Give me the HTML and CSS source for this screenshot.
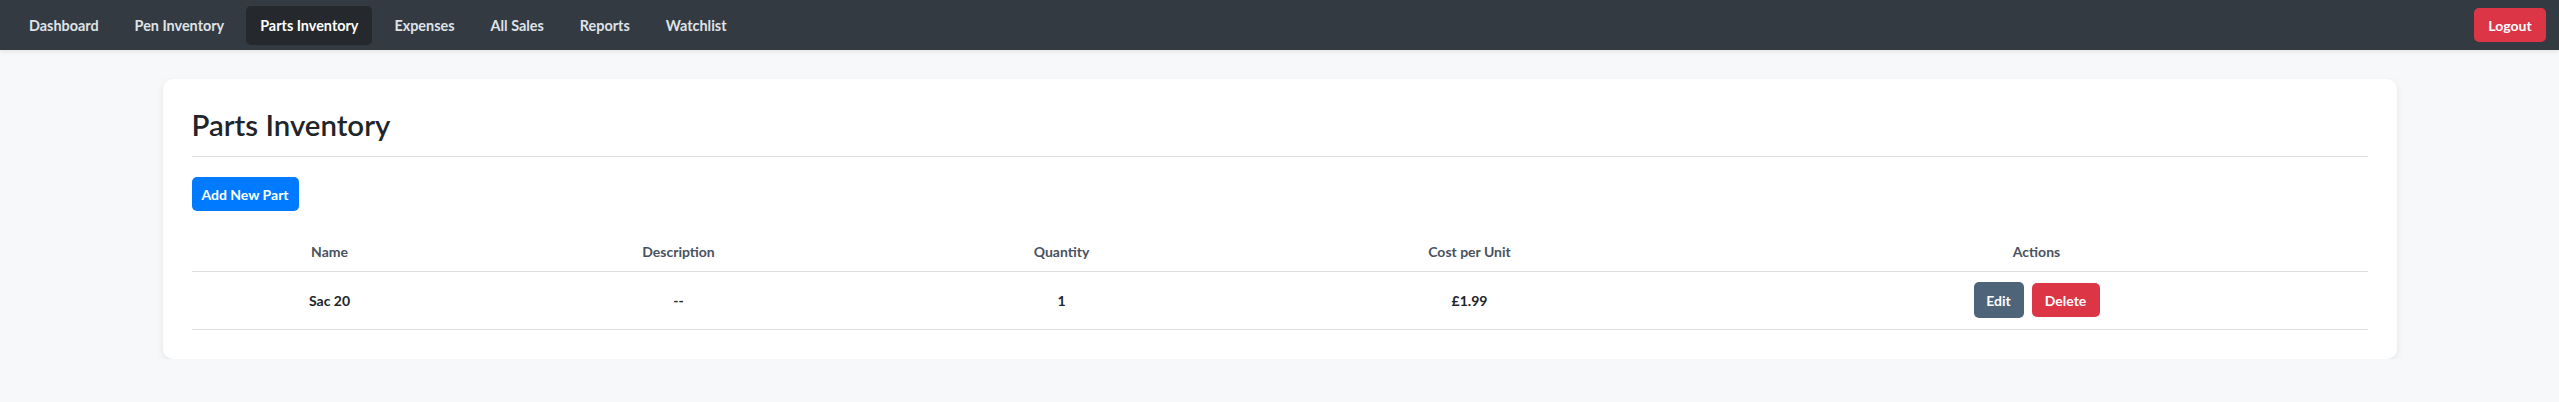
FILE: index.html
```html
<!DOCTYPE html>
<html lang="en">
<head>
<meta charset="utf-8">
<title>Parts Inventory</title>
<link rel="stylesheet" href="styles.css">
</head>
<body>
<nav class="navbar">
  <ul class="nav-links">
    <li><a class="nav-link" href="#">Dashboard</a></li>
    <li><a class="nav-link" href="#">Pen Inventory</a></li>
    <li><a class="nav-link active" href="#">Parts Inventory</a></li>
    <li><a class="nav-link" href="#">Expenses</a></li>
    <li><a class="nav-link" href="#">All Sales</a></li>
    <li><a class="nav-link" href="#">Reports</a></li>
    <li><a class="nav-link" href="#">Watchlist</a></li>
  </ul>
  <button class="btn btn-danger btn-logout">Logout</button>
</nav>
<main class="container">
  <section class="card">
    <h1 class="page-title">Parts Inventory</h1>
    <button class="btn btn-primary">Add New Part</button>
    <table class="parts-table">
      <colgroup>
        <col class="col-name">
        <col class="col-desc">
        <col class="col-qty">
        <col class="col-cost">
        <col class="col-actions">
      </colgroup>
      <thead>
        <tr>
          <th>Name</th>
          <th>Description</th>
          <th>Quantity</th>
          <th>Cost per Unit</th>
          <th>Actions</th>
        </tr>
      </thead>
      <tbody>
        <tr>
          <td>Sac 20</td>
          <td>--</td>
          <td>1</td>
          <td>£1.99</td>
          <td>
            <div class="actions">
              <button class="btn btn-edit">Edit</button>
              <button class="btn btn-danger btn-sm">Delete</button>
            </div>
          </td>
        </tr>
      </tbody>
    </table>
  </section>
</main>
</body>
</html>
```

FILE: styles.css
```css
* { box-sizing: border-box; }

html, body {
  margin: 0;
  padding: 0;
}

body {
  font-family: Lato, "Open Sans", "Liberation Sans", sans-serif;
  background: #f7f8fa;
  color: #212529;
  font-size: 14px;
}

.navbar {
  height: 50px;
  background: #343a41;
  display: flex;
  align-items: center;
  justify-content: space-between;
  padding: 0 13px 0 15px;
  box-shadow: 0 2px 4px rgba(0, 0, 0, 0.08);
}

.nav-links {
  list-style: none;
  margin: 0;
  padding: 0;
  display: flex;
  gap: 8px;
}

.nav-link {
  display: block;
  height: 39px;
  line-height: 39px;
  padding: 0 14px;
  border-radius: 5px;
  color: #dfe3e8;
  text-decoration: none;
  font-weight: 700;
  font-size: 14.4px;
}

.nav-link.active {
  background: #25282d;
  color: #ffffff;
}

.btn {
  font-family: inherit;
  font-weight: 700;
  font-size: 14px;
  border: none;
  border-radius: 5px;
  color: #ffffff;
  cursor: pointer;
  height: 34px;
  padding: 0 14px;
}

.btn-danger { background: #dc3545; }
.btn-primary { background: #007bff; }

.btn-logout {
  width: 72px;
  padding: 0;
}

.container {
  max-width: 2234px;
  margin: 29px auto 0;
}

.card {
  background: #ffffff;
  border-radius: 10px;
  box-shadow: 0 3px 8px rgba(0, 0, 0, 0.08);
  padding: 28px 29px 29px;
}

.page-title {
  margin: 0 0 20px;
  font-size: 29.4px;
  line-height: 36px;
  font-weight: 600;
  color: #212529;
  padding-bottom: 13px;
  border-bottom: 1px solid #dddee4;
}

.btn-primary {
  display: block;
  width: 107px;
  padding: 0;
}

.parts-table {
  width: 100%;
  margin-top: 21px;
  border-collapse: collapse;
  table-layout: fixed;
}

.col-name { width: 276px; }
.col-desc { width: 422px; }
.col-qty { width: 344px; }
.col-cost { width: 472px; }

.parts-table th {
  font-weight: 700;
  color: #495260;
  padding: 9px 12px;
  line-height: 21px;
  text-align: center;
  border-bottom: 1px solid #dfdfe2;
}

.parts-table td {
  font-weight: 700;
  color: #212529;
  padding: 10px 12px 11px;
  line-height: 21px;
  text-align: center;
  vertical-align: middle;
  border-bottom: 1px solid #dfdfe2;
}

.actions {
  display: flex;
  justify-content: center;
  align-items: center;
  gap: 8px;
}

.btn-edit {
  background: #4e6479;
  height: 36px;
  width: 50px;
  padding: 0;
}

.btn-sm {
  width: 68px;
  padding: 0;
}
```
